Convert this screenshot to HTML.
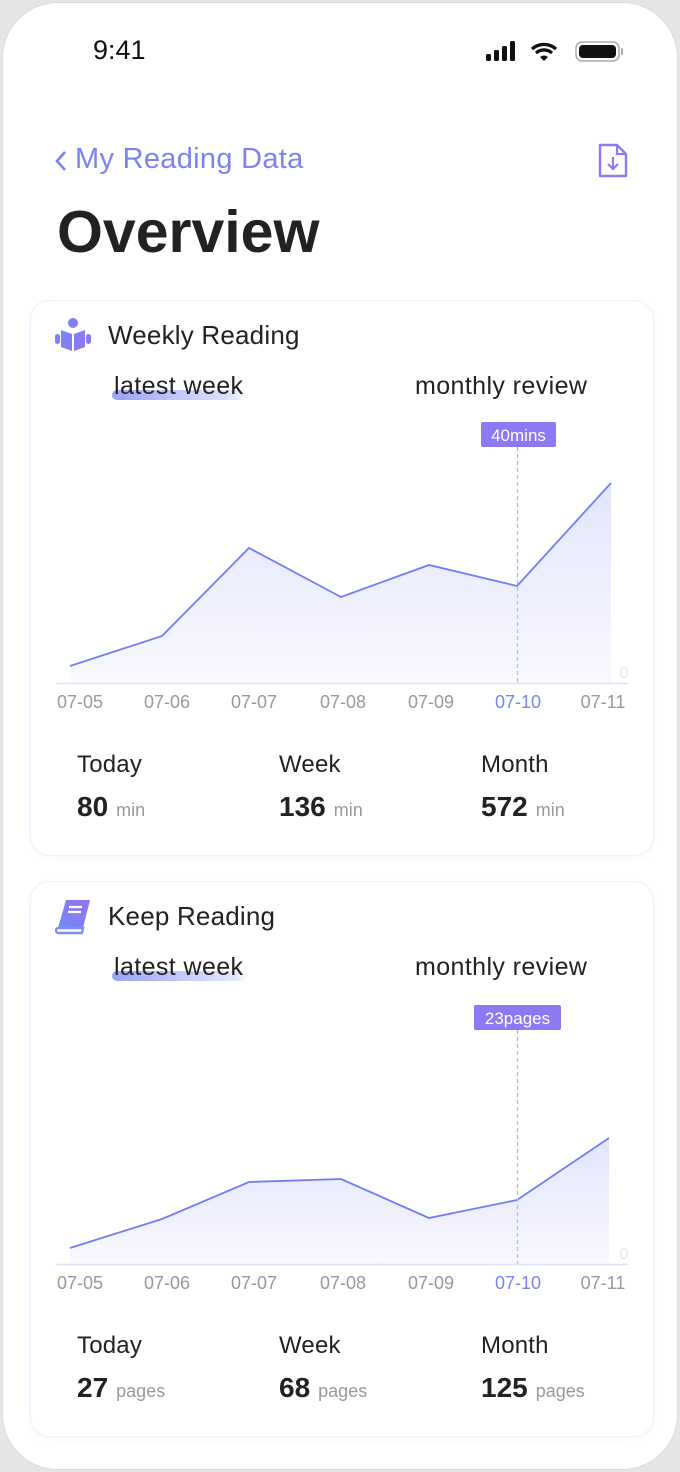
<!DOCTYPE html>
<html><head><meta charset="utf-8"><style>
*{margin:0;padding:0;box-sizing:border-box}
body{width:680px;height:1472px;background:#e6e6e6;font-family:"Liberation Sans",sans-serif;position:relative;overflow:hidden}
.phone{position:absolute;left:2px;top:2px;width:676px;height:1468px;background:#fff;border-radius:56px;border:1px solid #ddd}
.a{position:absolute;white-space:nowrap}
.card{position:absolute;left:30px;width:624px;border:1px solid #eef0fb;border-radius:20px;background:#fff;box-shadow:0 2px 6px rgba(120,130,220,.06)}
.lbl{font-size:24px;color:#222;letter-spacing:.2px}
.val{font-size:28px;font-weight:bold;color:#222}
.unit{font-size:18px;color:#999;font-weight:normal;margin-left:8px}
.tab{font-size:25px;color:#222;letter-spacing:.4px}
</style></head><body>
<div class="phone"></div>
<div class="a" style="left:93px;top:35px;font-size:27px;color:#111">9:41</div>
<svg class="a" style="left:486px;top:40px" width="140" height="24" viewBox="0 0 140 24">
<rect x="0" y="14" width="5" height="7" rx="1.5" fill="#111"/><rect x="8" y="10" width="5" height="11" rx="1.5" fill="#111"/><rect x="16" y="6" width="5" height="15" rx="1.5" fill="#111"/><rect x="24" y="1" width="5" height="20" rx="1.5" fill="#111"/>
<path d="M46 9a18 18 0 0 1 24 0" stroke="#111" stroke-width="3.4" fill="none"/><path d="M50 13a12 12 0 0 1 16 0" stroke="#111" stroke-width="3.4" fill="none"/><path d="M54 17l4 4 4-4a6 6 0 0 0-8 0z" fill="#111"/>
<rect x="90" y="2" width="43" height="19" rx="6" fill="none" stroke="#aaa" stroke-width="1.5"/><rect x="93" y="5" width="37" height="13" rx="4" fill="#111"/><rect x="135" y="8" width="2" height="7" rx="1" fill="#aaa"/>
</svg>
<svg class="a" style="left:54px;top:150px" width="14" height="22"><path d="M11 2L3 11l8 9" stroke="#7b83f3" stroke-width="2.6" fill="none"/></svg>
<div class="a" style="left:75px;top:143px;font-size:29px;color:#7b83f3;letter-spacing:.3px">My Reading Data</div>
<svg class="a" style="left:597px;top:143px" width="32" height="36" viewBox="0 0 32 36"><path d="M3 2h17l9 9v22H3z" fill="none" stroke="#8a7cf4" stroke-width="2.4" stroke-linejoin="round"/><path d="M20 2v9h9" fill="none" stroke="#8a7cf4" stroke-width="2.2"/><path d="M16 14v12M11 21l5 5 5-5" stroke="#8a7cf4" stroke-width="2.2" fill="none"/></svg>
<div class="a" style="left:57px;top:198px;font-size:59px;font-weight:bold;color:#222">Overview</div>

<div class="card" style="top:300px;height:556px"></div>
<svg class="a" style="left:54px;top:317px" width="38" height="36" viewBox="0 0 38 36"><defs><linearGradient id="g" x1="0" y1="0" x2="1" y2="1"><stop offset="0" stop-color="#6f8cf7"/><stop offset="1" stop-color="#9a6ff3"/></linearGradient></defs><circle cx="19" cy="6" r="5" fill="url(#g)"/><path d="M7 13l11 4v17l-11-4zM31 13l-11 4v17l11-4z" fill="url(#g)"/><rect x="1" y="17" width="5" height="10" rx="2.5" fill="url(#g)"/><rect x="32" y="17" width="5" height="10" rx="2.5" fill="url(#g)"/></svg>
<div class="a" style="left:108px;top:320px;font-size:26px;color:#222;letter-spacing:.2px">Weekly Reading</div>
<div class="a" style="left:112px;top:390px;width:136px;height:10px;border-radius:5px;background:linear-gradient(90deg,#9aa2f5,#e4e6fc 90%,transparent)"></div>
<div class="a tab" style="left:114px;top:372px">latest week</div>
<div class="a tab" style="left:415px;top:372px">monthly review</div>

<div class="card" style="top:881px;height:556px"></div>
<svg class="a" style="left:55px;top:898px" width="40" height="38" viewBox="0 0 40 38"><defs><linearGradient id="g2" x1="0" y1="1" x2="1" y2="0"><stop offset="0" stop-color="#6f8cf7"/><stop offset="1" stop-color="#9a6ff3"/></linearGradient></defs><path d="M11 2h24l-7 28H3z" fill="url(#g2)"/><path d="M3 30h25l-1 5H4a2 2 0 0 1-1-5z" fill="none" stroke="#7c8df6" stroke-width="2.4"/><path d="M14 9h13M13 14h13" stroke="#fff" stroke-width="2.2"/></svg>
<div class="a" style="left:108px;top:901px;font-size:26px;color:#222;letter-spacing:.2px">Keep Reading</div>
<div class="a" style="left:112px;top:971px;width:136px;height:10px;border-radius:5px;background:linear-gradient(90deg,#9aa2f5,#e4e6fc 90%,transparent)"></div>
<div class="a tab" style="left:114px;top:953px">latest week</div>
<div class="a tab" style="left:415px;top:953px">monthly review</div>

<svg class="a" style="left:0;top:0" width="680" height="1472">
<defs><linearGradient id="fa" x1="0" y1="0" x2="0" y2="1"><stop offset="0" stop-color="#dcdefb"/><stop offset="1" stop-color="#f7f7fe"/></linearGradient></defs>
<path d="M70 666L162 636L249 548L341 597L429 565L517 586L611 483L611 683L70 683Z" fill="url(#fa)" opacity=".8"/>
<polyline points="70,666 162,636 249,548 341,597 429,565 517,586 611,483" fill="none" stroke="#6f7ff3" stroke-width="1.8"/>
<line x1="56" y1="683.5" x2="628" y2="683.5" stroke="#dfe2fa" stroke-width="1.5"/>
<line x1="517.5" y1="447" x2="517.5" y2="683" stroke="#b4baf4" stroke-width="1.3" stroke-dasharray="4 3"/>
<rect x="481" y="422" width="75" height="25" rx="2" fill="#8c79f4"/>
<text x="518.5" y="441" font-size="17" fill="#fff" text-anchor="middle" font-family="Liberation Sans">40mins</text>
<text x="624" y="678" font-size="16" fill="#e4e4ee" text-anchor="middle" font-family="Liberation Sans">0</text>

<path d="M70 1248L162 1219L249 1182L341 1179L429 1218L517 1200L609 1138L609 1264L70 1264Z" fill="url(#fa)" opacity=".8"/>
<polyline points="70,1248 162,1219 249,1182 341,1179 429,1218 517,1200 609,1138" fill="none" stroke="#6f7ff3" stroke-width="1.8"/>
<line x1="56" y1="1264.5" x2="628" y2="1264.5" stroke="#dfe2fa" stroke-width="1.5"/>
<line x1="517.5" y1="1030" x2="517.5" y2="1264" stroke="#b4baf4" stroke-width="1.3" stroke-dasharray="4 3"/>
<rect x="474" y="1005" width="87" height="25" rx="2" fill="#8c79f4"/>
<text x="517.5" y="1024" font-size="17" fill="#fff" text-anchor="middle" font-family="Liberation Sans">23pages</text>
<text x="624" y="1259" font-size="16" fill="#e4e4ee" text-anchor="middle" font-family="Liberation Sans">0</text>

<g font-family="Liberation Sans" font-size="18" fill="#999" text-anchor="middle">
<text x="80" y="708">07-05</text><text x="167" y="708">07-06</text><text x="254" y="708">07-07</text><text x="343" y="708">07-08</text><text x="431" y="708">07-09</text><text x="518" y="708" fill="#7b83f3">07-10</text><text x="603" y="708">07-11</text>
<text x="80" y="1289">07-05</text><text x="167" y="1289">07-06</text><text x="254" y="1289">07-07</text><text x="343" y="1289">07-08</text><text x="431" y="1289">07-09</text><text x="518" y="1289" fill="#7b83f3">07-10</text><text x="603" y="1289">07-11</text>
</g>
</svg>

<div class="a lbl" style="left:77px;top:751px">Today</div>
<div class="a lbl" style="left:279px;top:751px">Week</div>
<div class="a lbl" style="left:481px;top:751px">Month</div>
<div class="a val" style="left:77px;top:791px">80<span class="unit">min</span></div>
<div class="a val" style="left:279px;top:791px">136<span class="unit">min</span></div>
<div class="a val" style="left:481px;top:791px">572<span class="unit">min</span></div>

<div class="a lbl" style="left:77px;top:1332px">Today</div>
<div class="a lbl" style="left:279px;top:1332px">Week</div>
<div class="a lbl" style="left:481px;top:1332px">Month</div>
<div class="a val" style="left:77px;top:1372px">27<span class="unit">pages</span></div>
<div class="a val" style="left:279px;top:1372px">68<span class="unit">pages</span></div>
<div class="a val" style="left:481px;top:1372px">125<span class="unit">pages</span></div>
</body></html>
